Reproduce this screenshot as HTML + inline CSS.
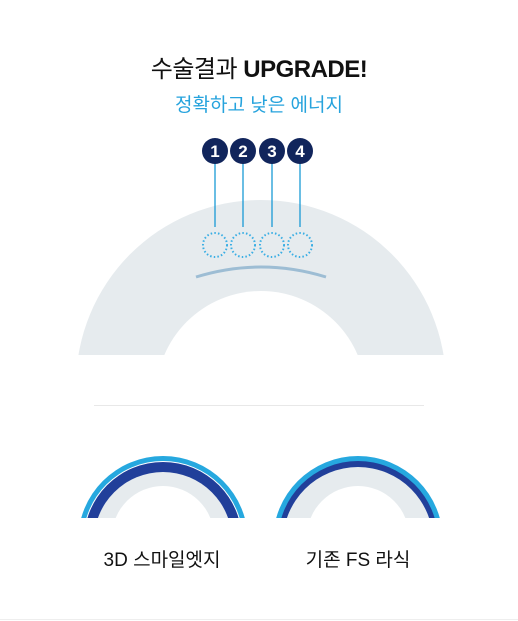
<!DOCTYPE html>
<html><head><meta charset="utf-8"><style>
body{margin:0;width:518px;height:621px;background:#fff;position:relative;overflow:hidden;font-family:"Liberation Sans","Noto Sans CJK KR",sans-serif}
.t{position:absolute;left:0;width:518px;text-align:center}
</style></head><body>
<div class="t" style="top:49px;font-size:24px;color:#111;letter-spacing:-0.5px">수술결과 <b>UPGRADE!</b></div>
<div class="t" style="top:90px;font-size:19px;color:#26a3dd">정확하고 낮은 에너지</div>
<svg width="518" height="621" style="position:absolute;left:0;top:0">
<defs>
<clipPath id="c1"><rect x="0" y="0" width="518" height="355"/></clipPath>
<clipPath id="c2"><rect x="0" y="0" width="518" height="518"/></clipPath>
</defs>
<g clip-path="url(#c1)">
<circle cx="261" cy="385" r="185" fill="#e6ebee"/>
<circle cx="261" cy="396" r="105" fill="#fff"/>
</g>
<path d="M196 277 Q261 257 326 277" stroke="#9dbdd4" stroke-width="3" fill="none"/>
<g stroke="#1a9ad6" stroke-width="1.3">
<line x1="215" y1="160" x2="215" y2="227"/><line x1="243" y1="160" x2="243" y2="227"/><line x1="272" y1="160" x2="272" y2="227"/><line x1="300" y1="160" x2="300" y2="227"/></g>
<g fill="none" stroke="#3aaee4" stroke-width="2" stroke-dasharray="1.5 2.2">
<circle cx="215" cy="245" r="12"/><circle cx="243" cy="245" r="12"/><circle cx="272" cy="245" r="12"/><circle cx="300" cy="245" r="12"/></g>
<g fill="#11255c"><circle cx="215" cy="151" r="13"/><circle cx="243" cy="151" r="13"/><circle cx="272" cy="151" r="13"/><circle cx="300" cy="151" r="13"/></g>
<g fill="#fff" font-size="17" font-weight="bold" text-anchor="middle" font-family="Liberation Sans,sans-serif">
<text x="215" y="157">1</text><text x="243" y="157">2</text><text x="272" y="157">3</text><text x="300" y="157">4</text></g>
<line x1="94" y1="405.5" x2="424" y2="405.5" stroke="#e8e8e8"/>
<g clip-path="url(#c2)">
<circle cx="163" cy="541" r="85" fill="#26a8df"/>
<circle cx="163" cy="541" r="80" fill="#fff"/>
<circle cx="163" cy="541" r="79" fill="#213f9a"/>
<circle cx="163" cy="541" r="69" fill="#e6ebee"/>
<circle cx="163" cy="537" r="51" fill="#fff"/>
<circle cx="358" cy="541" r="85" fill="#26a8df"/>
<circle cx="358" cy="541" r="80" fill="#213f9a"/>
<circle cx="358" cy="542" r="75" fill="#e6ebee"/>
<circle cx="358" cy="537" r="51" fill="#fff"/>
</g>
</svg>
<div style="position:absolute;left:62px;width:200px;top:545px;text-align:center;font-size:19px;color:#111">3D 스마일엣지</div>
<div style="position:absolute;left:258px;width:200px;top:545px;text-align:center;font-size:19px;color:#111">기존 FS 라식</div>
<div style="position:absolute;left:0;top:619px;width:518px;height:1px;background:#eee"></div>
</body></html>
